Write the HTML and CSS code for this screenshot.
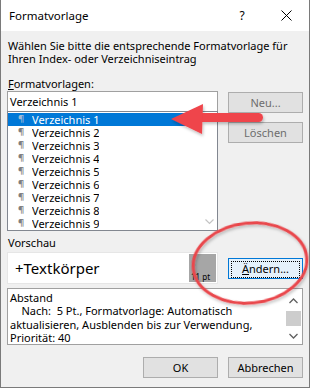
FILE: index.html
```html
<!DOCTYPE html>
<html lang="de">
<head>
    <meta charset="UTF-8">
    <title>Formatvorlage</title>
    <link rel="stylesheet" href="styles.css">
</head>
<body>

<div class="window">
    <div class="titlebar">
        <span class="title">Formatvorlage</span>
        <span class="help">?</span>
        <span class="close">
            <svg width="11" height="11" viewBox="0 0 11 11"><path d="M0.5 0.5 L10.5 10.5 M10.5 0.5 L0.5 10.5" stroke="#000" stroke-width="1" fill="none"/></svg>
        </span>
    </div>

    <div class="content">
        <p class="intro">Wählen Sie bitte die entsprechende Formatvorlage für<br>Ihren Index- oder Verzeichniseintrag</p>

        <div class="label"><u>F</u>ormatvorlagen:</div>
        <div class="row">
            <div class="styles-col">
                <div class="input">Verzeichnis 1</div>
                <div class="list">
                    <ul class="items">
                        <li class="selected"><span class="pil">¶</span><span class="name">Verzeichnis 1</span></li>
                        <li><span class="pil">¶</span><span class="name">Verzeichnis 2</span></li>
                        <li><span class="pil">¶</span><span class="name">Verzeichnis 3</span></li>
                        <li><span class="pil">¶</span><span class="name">Verzeichnis 4</span></li>
                        <li><span class="pil">¶</span><span class="name">Verzeichnis 5</span></li>
                        <li><span class="pil">¶</span><span class="name">Verzeichnis 6</span></li>
                        <li><span class="pil">¶</span><span class="name">Verzeichnis 7</span></li>
                        <li><span class="pil">¶</span><span class="name">Verzeichnis 8</span></li>
                        <li><span class="pil">¶</span><span class="name">Verzeichnis 9</span></li>
                    </ul>
                    <div class="list-scroll">
                        <svg width="9" height="6" viewBox="0 0 9 6"><path d="M0.5 0.5 L4.5 4.5 L8.5 0.5" stroke="#c4c4c4" stroke-width="1.2" fill="none"/></svg>
                    </div>
                </div>
            </div>
            <div class="side">
                <button class="btn disabled">Neu...</button>
                <button class="btn disabled">Löschen</button>
            </div>
        </div>

        <div class="label preview-label">Vorschau</div>
        <div class="row preview-row">
            <div class="preview">
                <span class="preview-text">+Textkörper</span>
                <span class="preview-size">11 pt</span>
            </div>
            <button class="btn focused"><span class="focus-rect"><u>Ä</u>ndern...</span></button>
        </div>

        <div class="desc">
            <div class="desc-text">
                Abstand<br>
                &nbsp;&nbsp;&nbsp;&nbsp;Nach:&nbsp; 5 Pt., Formatvorlage: Automatisch<br>
                aktualisieren, Ausblenden bis zur Verwendung,<br>
                Priorität: 40
            </div>
            <div class="desc-scroll">
                <svg width="9" height="6" viewBox="0 0 9 6"><path d="M0.5 5 L4.5 1 L8.5 5" stroke="#606060" stroke-width="1.3" fill="none"/></svg>
                <div class="thumb"></div>
                <svg width="9" height="6" viewBox="0 0 9 6"><path d="M0.5 1 L4.5 5 L8.5 1" stroke="#606060" stroke-width="1.3" fill="none"/></svg>
            </div>
        </div>

        <div class="footer">
            <button class="btn">OK</button>
            <button class="btn">Abbrechen</button>
        </div>
    </div>

    <!-- red annotations drawn over the dialog -->
    <svg class="annotations" width="310" height="388" viewBox="0 0 310 388">
        <defs>
            <filter id="shadow" x="-20%" y="-20%" width="140%" height="140%">
                <feDropShadow dx="1" dy="2" stdDeviation="1.5" flood-color="#000" flood-opacity="0.25"/>
            </filter>
        </defs>
        <g filter="url(#shadow)" fill="#ef444b">
            <rect x="196" y="113" width="67" height="9" rx="4.5"/>
            <polygon points="171,119 203,104 202,134"/>
        </g>
        <ellipse cx="250" cy="263" rx="57" ry="40" transform="rotate(-6 250 263)" fill="none" stroke="#e9464c" stroke-width="3" filter="url(#shadow)"/>
    </svg>
</div>

</body>
</html>
```

FILE: styles.css
```css
body {
    margin: 0;
    font-family: "Noto Sans", sans-serif;
    font-size: 11px;
    color: #000;
}
.window {
    position: relative;
    width: 310px;
    height: 388px;
    box-sizing: border-box;
    border: 1px solid #7a7a7a;
    border-top: none;
    background-color: #f0f0f0;
    overflow: hidden;
}
.titlebar {
    height: 31px;
    background-color: #fff;
    display: flex;
    align-items: center;
    padding-left: 8px;
    font-size: 11.5px;
}
.title {
    flex: 1;
}
.help {
    width: 46px;
    padding-left: 4px;
    box-sizing: border-box;
    text-align: center;
    font-size: 12px;
}
.close {
    width: 46px;
    display: flex;
    justify-content: center;
}
.content {
    padding: 8px 6px 0 6px;
}
.intro {
    margin: 0;
    padding-left: 1px;
    line-height: 13px;
    white-space: nowrap;
}
.label {
    margin-top: 12px;
    padding-left: 1px;
    line-height: 13px;
}
.row {
    display: flex;
    gap: 10px;
}
.styles-col {
    width: 211px;
    margin-top: 1px;
}
.input {
    height: 20px;
    box-sizing: border-box;
    border: 1px solid #a0a0a0;
    border-bottom: none;
    background-color: #fff;
    padding-left: 2px;
    line-height: 19px;
}
.list {
    height: 120px;
    box-sizing: border-box;
    border: 1px solid #828790;
    background-color: #fff;
    display: flex;
}
.items {
    list-style: none;
    margin: 0;
    padding: 1px 0 0 0;
    flex: 1;
}
.items li {
    height: 13px;
    padding-left: 10px;
    white-space: nowrap;
    display: flex;
    align-items: center;
}
.items li.selected {
    background-color: #0078d7;
    color: #fff;
}
.pil,
.name {
    display: block;
    height: 13px;
    line-height: 13px;
}
.name {
    overflow: hidden;
}
.pil {
    width: 14px;
    font-size: 9.5px;
    line-height: 12px;
    color: #7f7f7f;
    font-weight: bold;
}
.selected .pil {
    color: #9fb9d6;
}
.list-scroll {
    width: 15px;
    display: flex;
    align-items: flex-end;
    justify-content: center;
    padding-bottom: 5px;
}
.side {
    width: 75px;
    display: flex;
    flex-direction: column;
    gap: 9px;
    margin-top: 2px;
}
.btn {
    width: 75px;
    height: 21px;
    box-sizing: border-box;
    border: 1px solid #adadad;
    background-color: #e1e1e1;
    font-family: "Noto Sans", sans-serif;
    font-size: 11px;
    color: #000;
    padding: 0;
}
.btn.disabled {
    color: #6d6d6d;
}
.btn.focused {
    border-color: #0078d7;
    background-color: #e5f1fb;
    padding: 2px;
}
.focus-rect {
    display: block;
    height: 15px;
    line-height: 14px;
    border: 1px dotted #000;
}
.preview-label {
    margin-top: 5px;
}
.preview-row {
    margin-top: 3px;
    align-items: center;
}
.preview {
    width: 211px;
    height: 32px;
    box-sizing: border-box;
    background-color: #fff;
    border: 1px solid #e6e6e6;
    display: flex;
    padding: 1px 1px 1px 0;
}
.preview-text {
    flex: 1;
    font-size: 15px;
    padding-left: 7px;
    line-height: 28px;
}
.preview-size {
    width: 27px;
    background-color: #a6a6a6;
    font-size: 8px;
    display: flex;
    align-items: flex-end;
    white-space: nowrap;
    padding-left: 2px;
    box-sizing: border-box;
    line-height: 11px;
}
.desc {
    margin-top: 4px;
    height: 57px;
    box-sizing: border-box;
    border: 1px solid #a0a0a0;
    background-color: #fff;
    display: flex;
}
.desc-text {
    flex: 1;
    padding: 2px 0 0 2px;
    line-height: 13.3px;
}
.desc-scroll {
    width: 17px;
    display: flex;
    flex-direction: column;
    align-items: center;
    padding-top: 9px;
    gap: 7px;
}
.thumb {
    width: 15px;
    height: 15px;
    background-color: #cdcdcd;
}
.footer {
    display: flex;
    justify-content: flex-end;
    gap: 10px;
    margin-top: 12px;
}
.annotations {
    position: absolute;
    left: -1px;
    top: 0;
    pointer-events: none;
}
```
